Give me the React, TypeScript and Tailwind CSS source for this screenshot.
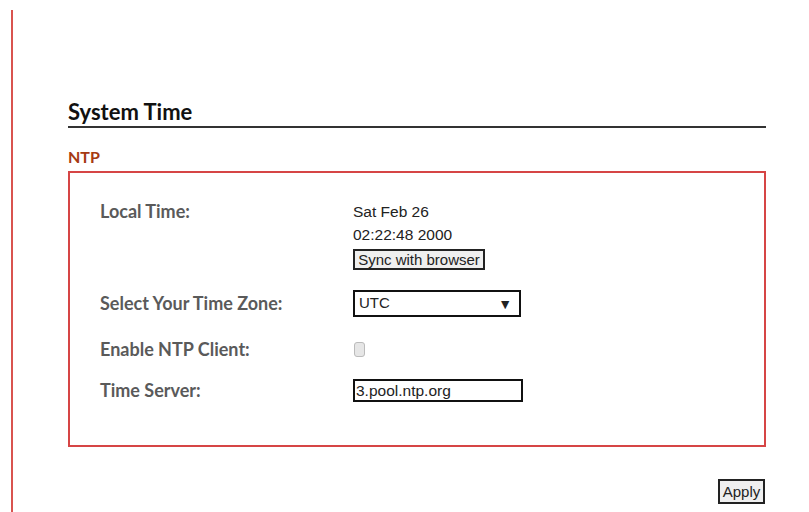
import React from 'react';

const label = "w-[253px] shrink-0 font-['Lato',sans-serif] text-[18px] font-bold text-[#5a5a5a]";
const value = "font-['Liberation_Sans',Arial,sans-serif] text-[15.5px] text-[#222]";

function Row({ title, className, children }: { title: string; className?: string; children: React.ReactNode }) {
  return (
    <div className={`flex items-center ${className ?? ''}`}>
      <div className={label}>{title}</div>
      <div>{children}</div>
    </div>
  );
}

export default function App() {
  return (
    <div className="flex h-[512px] w-[809px] overflow-hidden bg-white">
      {/* left rule of the content frame */}
      <div className="ml-[11px] mt-[10px] w-[2px] shrink-0 bg-[#d9534f]" />

      <main className="ml-[55px] w-[698px] pt-[98px]">
        <h1 className="border-b-2 border-[#333] pb-[1px] font-['Lato',sans-serif] text-[22px] font-bold leading-[27px] text-[#111]">
          System Time
        </h1>

        <div className="mt-[20px] font-['Lato',sans-serif] text-[16px] font-bold leading-[18px] text-[#a63a12]">
          NTP
        </div>

        <section className="mt-[5px] h-[276px] border-2 border-[#d64545] pl-[30px] pt-[27px]">
          <div className="flex">
            <div className={`${label} leading-[23px]`}>Local Time:</div>
            <div className={`${value} leading-[23px]`}>
              <div>Sat Feb 26</div>
              <div>02:22:48 2000</div>
              <button className="mt-[3px] flex h-[21px] w-[132px] items-center justify-center border-2 border-[#222] bg-[#efefef] text-[15px] leading-none">
                Sync with browser
              </button>
            </div>
          </div>

          <Row title="Select Your Time Zone:" className="mt-[20px]">
            <div className={`${value} flex h-[27px] w-[168px] items-center justify-between border-2 border-[#111] bg-white pl-[4px] pr-[7px] text-[15px]`}>
              <span>UTC</span>
              <span className="text-[14px] leading-none">▼</span>
            </div>
          </Row>

          <Row title="Enable NTP Client:" className="mt-[22px] h-[20px]">
            <div className="ml-[1px] h-[15px] w-[11px] rounded-[3px] border border-[#bbb] bg-[#e6e6e6]" />
          </Row>

          <Row title="Time Server:" className="mt-[18px]">
            <div className={`${value} flex h-[23px] w-[170px] items-center border-2 border-[#111] pl-[1px] text-[14.5px]`}>
              3.pool.ntp.org
            </div>
          </Row>
        </section>

        <div className="mt-[32px] flex justify-end pr-[1px]">
          <button className={`${value} flex h-[25px] w-[47px] items-center justify-center border-2 border-[#222] bg-[#efefef] text-[15px] leading-none`}>
            Apply
          </button>
        </div>
      </main>
    </div>
  );
}
